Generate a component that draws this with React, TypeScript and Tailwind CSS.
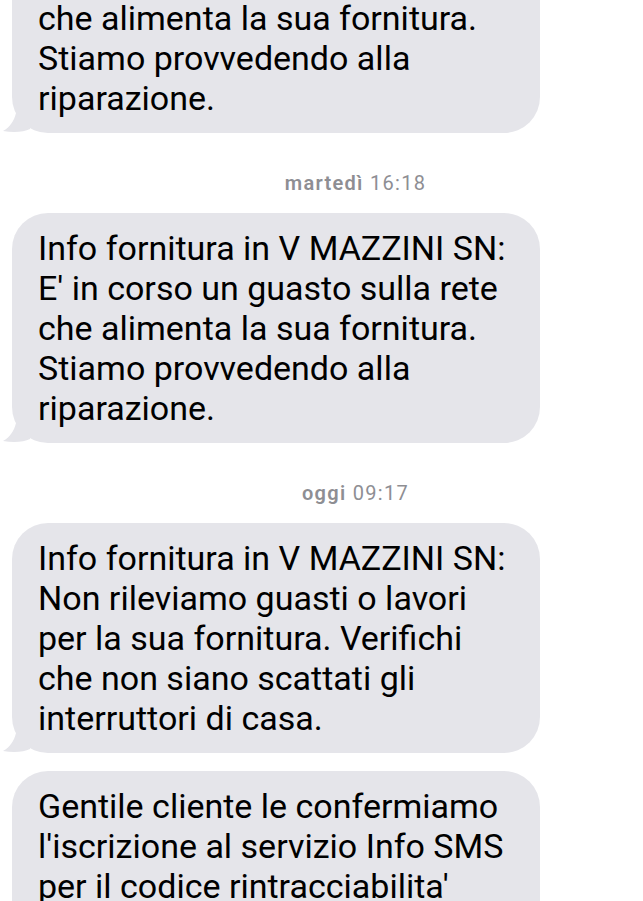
import React from "react";

const font = { fontFamily: "Roboto, 'Liberation Sans', sans-serif" };

function Tail() {
  return (
    <svg
      className="absolute left-[-10px] bottom-0"
      width="30"
      height="26"
      viewBox="0 0 30 26"
    >
      <path
        d="M14 0 L28 0 L28 22 C22 25 12 26 1 24 C8 20 12 14 14 6 Z"
        fill="#e5e5ea"
      />
    </svg>
  );
}

function Bubble({ lines, tail, className = "" }: { lines: string[]; tail?: boolean; className?: string }) {
  return (
    <div className={"relative ml-[12px] w-[528px] rounded-[36px] bg-[#e5e5ea] pl-[26px] py-[15px] " + className}>
      {tail && <Tail />}
      <div className="relative text-[34px] leading-[40px] text-black" style={font}>
        {lines.map((l, i) => (
          <div key={i} className="whitespace-nowrap h-[40px]">{l}</div>
        ))}
      </div>
    </div>
  );
}

function Stamp({ day, time }: { day: string; time: string }) {
  return (
    <div className="flex justify-center pl-[68px] pt-[40px] pb-[20px]">
      <div className="text-[20px] leading-[20px] tracking-[1.3px] text-[#8e8e93]" style={font}>
        <span className="font-semibold">{day}</span> <span>{time}</span>
      </div>
    </div>
  );
}

export default function App() {
  const guasto = [
    "Info fornitura in V MAZZINI SN:",
    "E' in corso un guasto sulla rete",
    "che alimenta la sua fornitura.",
    "Stiamo provvedendo alla",
    "riparazione.",
  ];
  return (
    <div className="w-[643px] h-[901px] overflow-hidden bg-white">
      <Bubble lines={guasto} tail className="mt-[-97px]" />
      <Stamp day="martedì" time="16:18" />
      <Bubble lines={guasto} tail />
      <Stamp day="oggi" time="09:17" />
      <Bubble
        tail
        lines={[
          "Info fornitura in V MAZZINI SN:",
          "Non rileviamo guasti o lavori",
          "per la sua fornitura. Verifichi",
          "che non siano scattati gli",
          "interruttori di casa.",
        ]}
      />
      <Bubble
        className="mt-[18px]"
        lines={[
          "Gentile cliente le confermiamo",
          "l'iscrizione al servizio Info SMS",
          "per il codice rintracciabilita'",
          "",
          "",
        ]}
      />
    </div>
  );
}
